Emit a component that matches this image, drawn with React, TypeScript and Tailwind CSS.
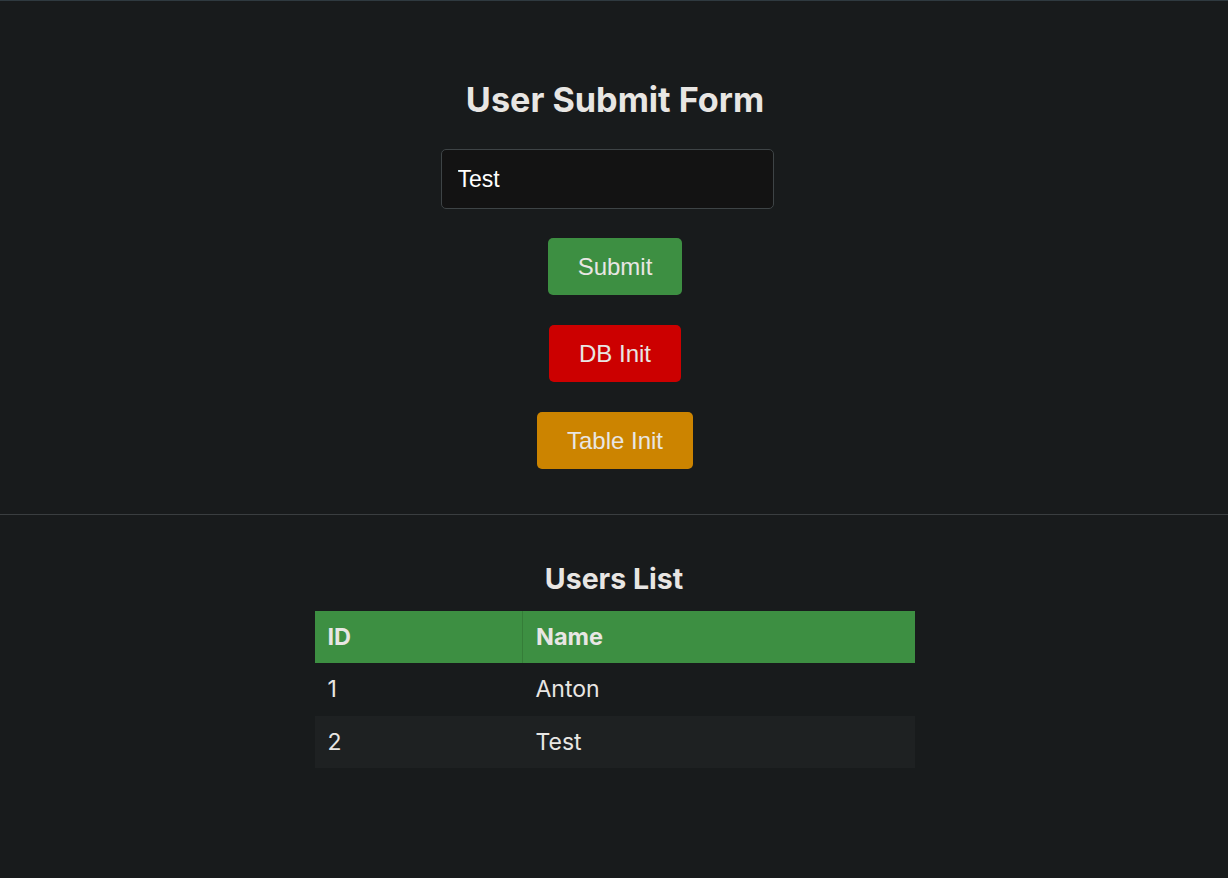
const users = [
  { id: 1, name: 'Anton' },
  { id: 2, name: 'Test' },
]

export default function App() {
  return (
    <div className="min-h-screen w-full border-t border-[#2f3a40] bg-[#181b1c] font-['Inter',sans-serif] text-[#e8e6e3]">
      <section className="flex flex-col items-center pt-[78px] pb-[45px]">
        <h1 className="ml-[2px] text-[34.2px] font-bold leading-[42px]">User Submit Form</h1>
        <input
          type="text"
          defaultValue="Test"
          className="mt-[28px] mr-[14px] h-[60px] w-[333px] rounded-[5px] border border-[#3e4446] bg-[#131313] px-4 font-['Liberation_Sans',Arial,sans-serif] text-[23px] text-white outline-none"
        />
        <div className="mt-[29px] ml-[2px] flex flex-col items-center gap-[30px] font-['Liberation_Sans',Arial,sans-serif] text-[24px]">
          <button className="h-[57px] rounded-[5px] bg-[#3d8f42] px-[30px] text-[#e8e6e3]">Submit</button>
          <button className="h-[57px] rounded-[5px] bg-[#cc0000] px-[30px] text-[#e8e6e3]">DB Init</button>
          <button className="h-[57px] rounded-[5px] bg-[#cc8400] px-[30px] text-[#e8e6e3]">Table Init</button>
        </div>
      </section>
      <hr className="border-t border-[#3a3e40]" />
      <section className="flex flex-col items-center pt-[47px]">
        <h2 className="text-[28.5px] font-bold leading-[34px]">Users List</h2>
        <table className="mt-[15px] ml-[1px] w-[600px] border-collapse text-left text-[23px]">
          <thead>
            <tr className="h-[52px] bg-[#3d8f42]">
              <th className="w-[208px] border-r border-[#357d38] px-[13px] text-[23.5px] font-bold">ID</th>
              <th className="px-[13px] text-[23.5px] font-bold">Name</th>
            </tr>
          </thead>
          <tbody>
            {users.map((u, i) => (
              <tr key={u.id} className={`h-[52.5px] ${i % 2 === 1 ? 'bg-[#1e2122]' : ''}`}>
                <td className="px-[13px]">{u.id}</td>
                <td className="px-[13px]">{u.name}</td>
              </tr>
            ))}
          </tbody>
        </table>
      </section>
    </div>
  )
}
